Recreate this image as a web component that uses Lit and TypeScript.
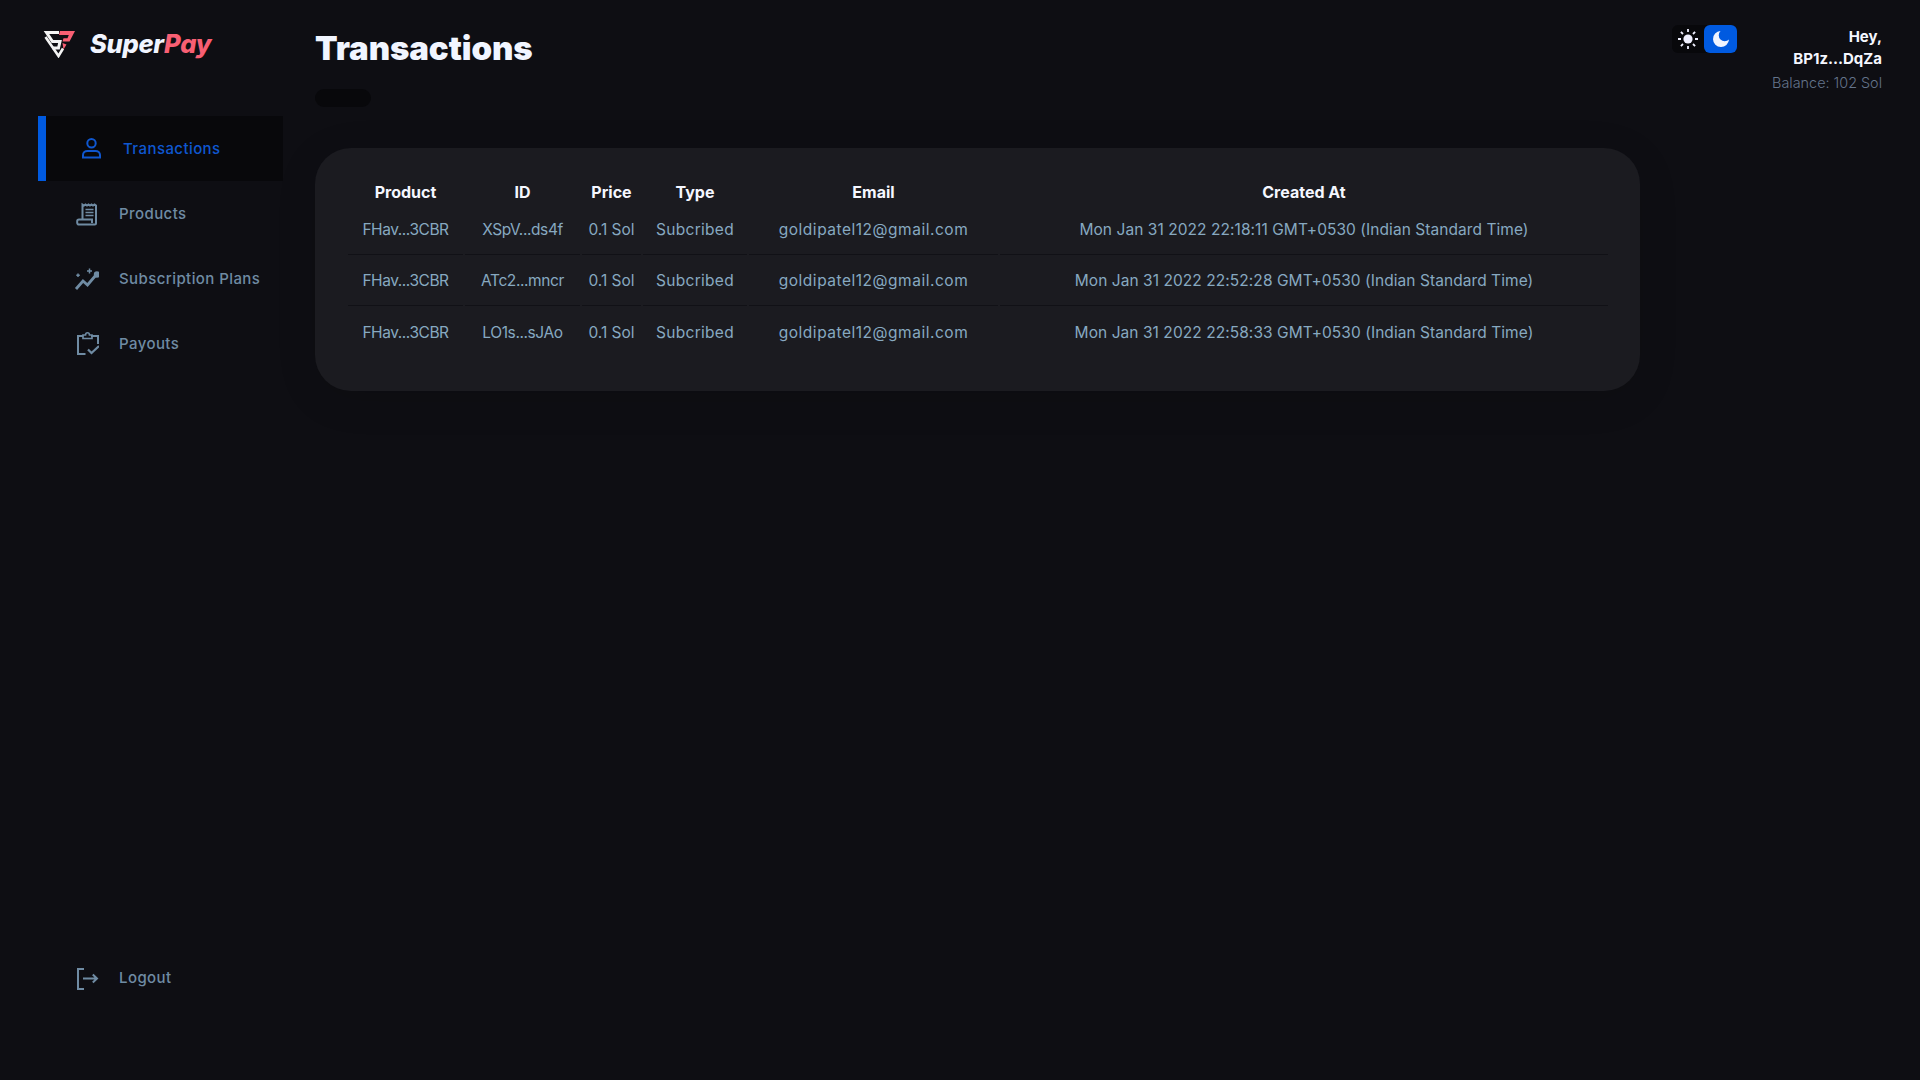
import { LitElement, html, css, svg } from "lit";
import { customElement } from "lit/decorators.js";

const rows = [
  ["FHav...3CBR", "XSpV...ds4f", "0.1 Sol", "Subcribed", "goldipatel12@gmail.com", "Mon Jan 31 2022 22:18:11 GMT+0530 (Indian Standard Time)"],
  ["FHav...3CBR", "ATc2...mncr", "0.1 Sol", "Subcribed", "goldipatel12@gmail.com", "Mon Jan 31 2022 22:52:28 GMT+0530 (Indian Standard Time)"],
  ["FHav...3CBR", "LO1s...sJAo", "0.1 Sol", "Subcribed", "goldipatel12@gmail.com", "Mon Jan 31 2022 22:58:33 GMT+0530 (Indian Standard Time)"],
];

const icons = {
  person: svg`<circle cx="13.500" cy="7.200" r="4.200"/><path d="M5 21.500v-2.500c0-2.400 2-4 4.500-4h8c2.500 0 4.500 1.600 4.500 4v2.500z"/>`,
  receipt: svg`<path d="M8.500 18.500V3.500l1.500 1 1.500-1 1.500 1 1.500-1 1.500 1 1.500-1 1.500 1 1.500-1 1.500 1V22.500c0 .6-.6 1-1.200 1H5c-1.200 0-1.800-.8-1.800-1.800v-1.400c0-1 .8-1.800 1.800-1.800h13v3.500"/><path d="M11.500 8.500h8M11.500 11.500h8M11.500 14.500h8" stroke-width="1.600"/>`,
  trend: svg`<path d="M2 23l7-8 4.500 4 8.500-10" stroke-width="2.800"/><circle cx="23" cy="8.500" r="2.200" fill="currentColor"/><path d="M15.500 2.500v5M13 5h5M4 7.500v3.500M2.300 9.200h3.500" stroke-width="1.500"/>`,
  clip: svg`<path d="M11.500 23H4V5h5M17 5h7v8"/><path d="M9 7.500V4h2.500c.2-3 3.800-3 4 0H18v3.500z" stroke-width="1.700"/><path d="M14 18.500l3.500 3.500 7.500-7" stroke-width="2.200"/>`,
  logout: svg`<path d="M10 4H4v20h6"/><path d="M9 13.500h14M18.800 9.500l4.200 4-4.200 4"/>`,
};

const icon = (name: keyof typeof icons) =>
  html`<svg class="ico" viewBox="0 0 25 26" fill="none" stroke="currentColor" stroke-width="2">${icons[name]}</svg>`;

@customElement("app-root")
export class AppRoot extends LitElement {
  static styles = css`
    :host {
      display: flex;
      height: 1080px;
      background: #0e0e13;
      font-family: Inter, "Noto Sans", sans-serif;
      color: #fff;
      overflow: hidden;
    }
    .side {
      width: 315px;
      flex: none;
      box-sizing: border-box;
      padding: 27px 32px 70px 38px;
      display: flex;
      flex-direction: column;
    }
    .logo {
      display: flex;
      align-items: center;
      gap: 15px;
      height: 32px;
      padding-left: 5px;
      margin-bottom: 57px;
      font-size: 25.5px;
      font-weight: 800;
      font-style: italic;
      letter-spacing: -0.3px;
      color: #f1f5ff;
    }
    .logo svg { width: 32px; height: 28px; flex: none; margin-top: 2px; }
    .logo b { color: #f85f73; font-weight: 800; }
    .item {
      height: 65px;
      display: flex;
      align-items: center;
      gap: 20px;
      padding-left: 36px;
      font-size: 15px;
      font-weight: 500;
      letter-spacing: 0.42px;
      color: #6f8ba3;
    }
    .ico { width: 25px; height: 26px; flex: none; }
    .item.active {
      background: #08080b;
      border-left: 8px solid #005ae0;
      padding-left: 32px;
      color: #0f57d0;
    }
    .logout { margin-top: auto; }
    .main { width: 1325px; flex: none; }
    h1 {
      margin: 0;
      padding-top: 28px;
      line-height: 40px;
      height: 40px;
      font-size: 33px;
      font-weight: 900;
      letter-spacing: -0.1px;
      color: #f1f5ff;
    }
    .pill {
      width: 56px;
      height: 18px;
      margin-top: 21px;
      border-radius: 9px;
      background: #08080b;
    }
    .card {
      margin-top: 41px;
      height: 243px;
      box-sizing: border-box;
      background: #1b1b20;
      border-radius: 36px;
      padding: 31px 31px;
      box-shadow: 0 8px 40px rgba(0, 0, 0, 0.12);
    }
    table {
      width: 1264px;
      table-layout: fixed;
      border-collapse: separate;
      border-spacing: 2px;
      text-align: center;
    }
    .c1, .c2 { width: 115px; }
    .c3 { width: 59px; }
    .c4 { width: 104px; }
    .c5 { width: 249px; }
    th {
      height: 22px;
      padding: 0;
      font-size: 16px;
      font-weight: 700;
      color: #f5f7ff;
    }
    td {
      height: 48.5px;
      padding: 0;
      font-size: 15.5px;
      font-weight: 400;
      color: #87a9c0;
      border-bottom: 1px solid #111116;
    }
    td.t0 { letter-spacing: -0.45px; }
    td.t1 { letter-spacing: -0.4px; }
    td.t3 { letter-spacing: 0.3px; }
    td.t4 { letter-spacing: 0.52px; }
    td.t5 { letter-spacing: 0.06px; }
    tr:last-child td { border-bottom: none; }
    .top {
      flex: 1;
      box-sizing: border-box;
      padding: 25px 38px 0 32px;
      display: flex;
      justify-content: space-between;
      align-items: flex-start;
    }
    .toggle { display: flex; height: 28px; background: #08080b; border-radius: 6px; }
    .seg { width: 32px; display: flex; align-items: center; justify-content: center; }
    .seg.on { width: 33px; background: #005ae0; border-radius: 6px; }
    .seg svg { width: 22px; height: 22px; }
    .user { padding-top: 1px; text-align: right; font-size: 15px; font-weight: 700; line-height: 22px; color: #f5f7ff; }
    .bal { font-size: 14.4px; font-weight: 300; color: #64748b; line-height: 26px; }
  `;

  render() {
    return html`
      <div class="side">
        <div class="logo">
          <svg viewBox="0 0 32 28" fill="none">
            <path d="M16 2.500H3.500L9.500 11.500H17L15.500 18H9.500" stroke="#f4f4f4" stroke-width="3"/>
            <path d="M2.500 7L15.500 26L20 18.500" stroke="#f4f4f4" stroke-width="2.600"/>
            <path d="M17 1H32L26.500 11.500H19.500L20.500 8.200H24.500L25.800 5H16z" fill="#f85f73"/>
            <path d="M19.500 13L23.500 14.500L20.500 19.500z" fill="#f85f73"/>
          </svg>
          <span>Super<b>Pay</b></span>
        </div>
        <div class="item active">${icon("person")}<span>Transactions</span></div>
        <div class="item">${icon("receipt")}<span>Products</span></div>
        <div class="item">${icon("trend")}<span>Subscription Plans</span></div>
        <div class="item">${icon("clip")}<span>Payouts</span></div>
        <div class="item logout">${icon("logout")}<span>Logout</span></div>
      </div>
      <div class="main">
        <h1>Transactions</h1>
        <div class="pill"></div>
        <div class="card">
          <table>
            <colgroup>
              <col class="c1" /><col class="c2" /><col class="c3" /><col class="c4" /><col class="c5" /><col />
            </colgroup>
            <thead>
              <tr><th>Product</th><th>ID</th><th>Price</th><th>Type</th><th>Email</th><th>Created At</th></tr>
            </thead>
            <tbody>
              ${rows.map((r) => html`<tr>${r.map((c, i) => html`<td class="t${i}">${c}</td>`)}</tr>`)}
            </tbody>
          </table>
        </div>
      </div>
      <div class="top">
        <div class="toggle">
          <div class="seg">
            <svg viewBox="0 0 22 22" fill="none" stroke="#f0f0ff" stroke-width="1.800">
              <circle cx="11" cy="11" r="4.600" fill="#f0f0ff" stroke="none"/>
              <path d="M11 1v3M11 18v3M1 11h3M18 11h3M3.900 3.900l2.100 2.100M16 16l2.100 2.100M3.900 18.100L6 16M16 6l2.100-2.100"/>
            </svg>
          </div>
          <div class="seg on">
            <svg viewBox="0 0 22 22"><path d="M10.500 3A8 8 0 1 0 19 11.500 6 6 0 0 1 10.500 3z" fill="#f0f4ff"/></svg>
          </div>
        </div>
        <div class="user">
          <div>Hey,</div>
          <div>BP1z...DqZa</div>
          <div class="bal">Balance: 102 Sol</div>
        </div>
      </div>
    `;
  }
}
